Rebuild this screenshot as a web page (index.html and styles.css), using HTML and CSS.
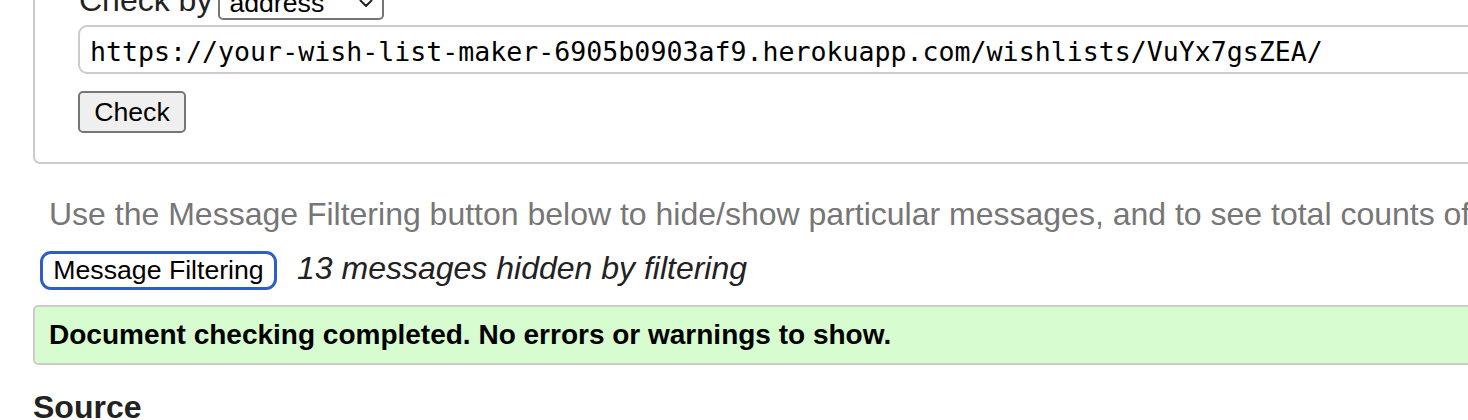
FILE: index.html
```
<!DOCTYPE html>
<html lang="en">
<head>
<meta charset="utf-8">
<title>Nu Html Checker</title>
<link rel="stylesheet" href="styles.css">
</head>
<body>
<div class="page">
  <div class="fieldset">
    <div class="checkby">
      <span class="checkby-label">Check by</span>
      <div class="select">
        <span class="select-text">address</span>
        <svg class="chevron" width="14" height="9" viewBox="0 0 14 9"><path d="M1.5 1.5 L7 7 L12.5 1.5" fill="none" stroke="#222" stroke-width="2" stroke-linecap="round" stroke-linejoin="round"/></svg>
      </div>
    </div>
    <div class="url-input">https://your-wish-list-maker-6905b0903af9.herokuapp.com/wishlists/VuYx7gsZEA/</div>
    <button class="check-btn">Check</button>
  </div>
  <p class="instructions">Use the Message Filtering button below to hide/show particular messages, and to see total counts of errors and warnings.</p>
  <div class="filter-row">
    <button class="filter-btn">Message Filtering</button>
    <span class="hidden-count">13 messages hidden by filtering</span>
  </div>
  <div class="success">Document checking completed. No errors or warnings to show.</div>
  <h2 class="source">Source</h2>
</div>
</body>
</html>
```
FILE: styles.css
```
html, body {
  margin: 0;
  padding: 0;
  background: #fff;
  overflow: hidden;
}
body {
  font-family: "Liberation Sans", Arial, sans-serif;
  color: #222;
  width: 1468px;
  height: 420px;
}
.page {
  padding-left: 33px;
  width: 1700px;
}
.fieldset {
  margin-top: -20px;
  border: 2px solid #ccc;
  border-top: none;
  border-radius: 0 0 7px 7px;
  padding: 0 0 29px 43px;
}
.checkby {
  display: flex;
  align-items: center;
  gap: 6px;
  height: 40px;
}
.checkby-label {
  font-size: 32px;
  line-height: 40px;
  padding-left: 1px;
}
.select {
  box-sizing: border-box;
  width: 166px;
  height: 40px;
  border: 2px solid #767676;
  border-radius: 5px;
  display: flex;
  align-items: center;
  justify-content: space-between;
  padding: 0 9px 0 9px;
  background: #fff;
}
.select-text {
  font-size: 26.67px;
  line-height: 32px;
  margin-top: 6px;
  color: #000;
}
.chevron {
  display: block;
  margin-top: 6px;
}
.url-input {
  box-sizing: border-box;
  margin-top: 5px;
  height: 49px;
  width: 1560px;
  border: 2px solid #ccc;
  border-radius: 9px;
  padding: 4px 10px 0 10px;
  font-family: "DejaVu Sans Mono", Menlo, monospace;
  font-size: 26.6px;
  line-height: 41px;
  color: #000;
  white-space: nowrap;
}
.check-btn {
  display: block;
  box-sizing: border-box;
  margin-top: 17px;
  width: 108px;
  height: 42px;
  border: 2px solid #767676;
  border-radius: 5px;
  background: #efefef;
  font-family: "Liberation Sans", Arial, sans-serif;
  font-size: 26.67px;
  color: #000;
  padding: 0;
}
.instructions {
  margin: 31px 0 0 16px;
  font-size: 32px;
  line-height: 38px;
  color: #767676;
  white-space: nowrap;
}
.filter-row {
  display: flex;
  align-items: center;
  gap: 20px;
  margin: 18px 0 0 7px;
  height: 39px;
}
.filter-btn {
  box-sizing: border-box;
  width: 237px;
  height: 39px;
  border: 3px solid #2c5ec6;
  border-radius: 11px;
  background: #fff;
  font-family: "Liberation Sans", Arial, sans-serif;
  font-size: 26.67px;
  color: #000;
  padding: 0;
}
.hidden-count {
  font-style: italic;
  font-size: 32px;
  line-height: 34px;
  padding-bottom: 5px;
  color: #222;
}
.success {
  box-sizing: border-box;
  margin-top: 15px;
  height: 60px;
  border: 2px solid #ccc;
  border-radius: 5px;
  background: #d7fcd0;
  padding-left: 14px;
  font-weight: bold;
  font-size: 28px;
  line-height: 56px;
  color: #000;
}
.source {
  margin: 23px 0 0 0;
  font-size: 32px;
  line-height: 38px;
  font-weight: bold;
  color: #222;
}
```
